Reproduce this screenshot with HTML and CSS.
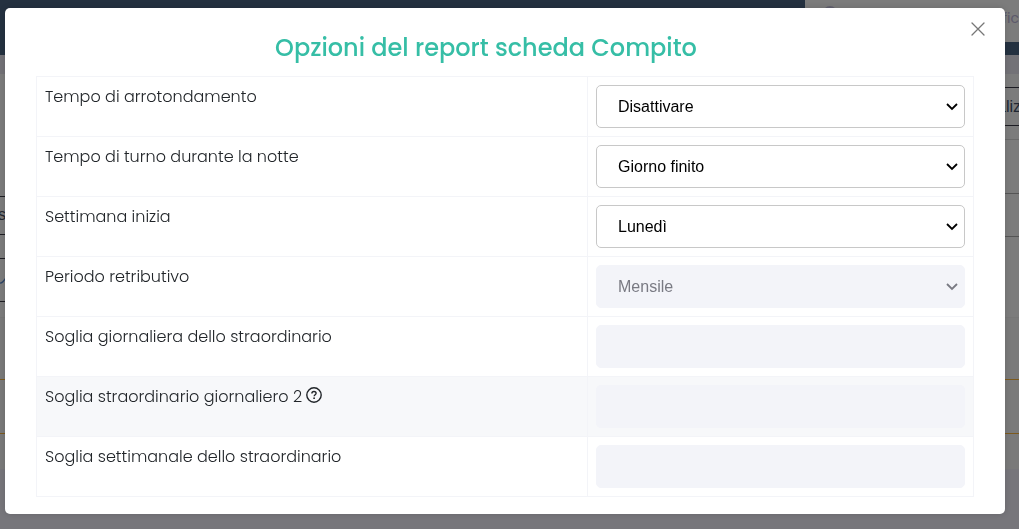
FILE: index.html
```html
<!DOCTYPE html>
<html lang="it">
<head>
    <meta charset="UTF-8">
    <meta name="viewport" content="width=device-width, initial-scale=1.0">
    <title>Opzioni del report</title>
    <link rel="stylesheet" href="styles.css">
</head>
<body>

<!-- Page behind the dialog -->
<div class="page">
    <header class="topbar">
        <div class="topbar-right">
            <svg class="search-icon" width="14" height="14" viewBox="0 0 14 14"><circle cx="7" cy="7" r="6" fill="none" stroke="#62616f" stroke-width="2"/></svg>
            <span class="topbar-text">fic</span>
        </div>
    </header>
    <div class="strip"></div>
    <main class="panel">
        <div class="panel-left">
            <div class="cell cell-name">s</div>
            <div class="cell cell-check">
                <svg width="12" height="10" viewBox="0 0 12 10"><path d="M-1 8c3 1 5-2 8-7" fill="none" stroke="#2d4566" stroke-width="1.3"/></svg>
            </div>
        </div>
        <div class="panel-right">
            <div class="cell cell-view">aliz</div>
            <div class="line line-filters"></div>
            <div class="line line-group"></div>
            <div class="line line-group-end"></div>
        </div>
    </main>
    <section class="results">
        <div class="results-row"></div>
    </section>
</div>

<div class="overlay">
    <div class="modal" role="dialog" aria-labelledby="modal-title">
        <button class="close-btn" type="button" aria-label="Chiudi">
            <svg width="14" height="14" viewBox="0 0 14 14"><path d="M1 1l12 12M13 1L1 13" fill="none" stroke="#777" stroke-width="1.3" stroke-linecap="round"/></svg>
        </button>
        <h2 class="modal-title" id="modal-title">Opzioni del report scheda Compito</h2>
        <table class="options">
            <tr>
                <td><label for="rounding">Tempo di arrotondamento</label></td>
                <td class="options-field">
                    <div class="select-box">
                        <select class="field" id="rounding"><option>Disattivare</option></select>
                        <svg class="arrow" width="12" height="8" viewBox="0 0 12 8"><path d="M1 1l5 5 5-5"/></svg>
                    </div>
                </td>
            </tr>
            <tr>
                <td><label for="night">Tempo di turno durante la notte</label></td>
                <td class="options-field">
                    <div class="select-box">
                        <select class="field" id="night"><option>Giorno finito</option></select>
                        <svg class="arrow" width="12" height="8" viewBox="0 0 12 8"><path d="M1 1l5 5 5-5"/></svg>
                    </div>
                </td>
            </tr>
            <tr>
                <td><label for="week">Settimana inizia</label></td>
                <td class="options-field">
                    <div class="select-box">
                        <select class="field" id="week"><option>Lunedì</option></select>
                        <svg class="arrow" width="12" height="8" viewBox="0 0 12 8"><path d="M1 1l5 5 5-5"/></svg>
                    </div>
                </td>
            </tr>
            <tr>
                <td><label for="period">Periodo retributivo</label></td>
                <td class="options-field">
                    <div class="select-box">
                        <select class="field" id="period" disabled><option>Mensile</option></select>
                        <svg class="arrow arrow-off" width="12" height="8" viewBox="0 0 12 8"><path d="M1 1l5 5 5-5"/></svg>
                    </div>
                </td>
            </tr>
            <tr>
                <td><label for="daily">Soglia giornaliera dello straordinario</label></td>
                <td class="options-field"><input class="field" id="daily" type="text" disabled></td>
            </tr>
            <tr class="active">
                <td>
                    <label for="daily2">Soglia straordinario giornaliero 2</label>
                    <svg class="help" width="16" height="16" viewBox="0 0 16 16"><circle cx="8" cy="8" r="7.2" fill="none" stroke="#212529" stroke-width="1.4"/><path d="M5.9 6.4c0-1.2.9-1.9 2.1-1.9s2.1.7 2.1 1.8c0 1.4-1.9 1.5-1.9 2.9" fill="none" stroke="#212529" stroke-width="1.4"/><circle cx="8.1" cy="11.2" r=".9" fill="#212529"/></svg>
                </td>
                <td class="options-field"><input class="field" id="daily2" type="text" disabled></td>
            </tr>
            <tr>
                <td><label for="weekly">Soglia settimanale dello straordinario</label></td>
                <td class="options-field"><input class="field" id="weekly" type="text" disabled></td>
            </tr>
        </table>
    </div>
</div>

</body>
</html>
```
FILE: styles.css
```css
* {
    box-sizing: border-box;
}
body {
    margin: 0;
    font-family: Poppins, Inter, sans-serif;
    font-size: 16px;
    font-weight: 300;
    color: #212529;
    background-color: #77767b;
}
.page {
    height: 100vh;
    overflow: hidden;
}
.topbar {
    display: flex;
    justify-content: flex-end;
    height: 55px;
    background-color: #243140;
}
.topbar-right {
    display: flex;
    justify-content: space-between;
    width: 21%;
    height: 42px;
    padding: 6px 0 0 18px;
    background-color: #7c7c7c;
    color: #5c596b;
    font-size: 14px;
    font-weight: 400;
    line-height: 24px;
}
.strip {
    height: 19px;
    background-color: #737277;
}
.panel {
    display: flex;
    justify-content: space-between;
    height: 244px;
    background-color: #7c7c7c;
    border-bottom: 1px solid #777;
}
.panel-left {
    width: 24px;
    padding-top: 122px;
}
.panel-right {
    width: 24px;
    padding-top: 13px;
}
.cell {
    border: 1px solid #1d1d24;
    border-width: 1px 0;
    font-family: "Liberation Sans", Arial, sans-serif;
    font-weight: 400;
}
.cell-name {
    height: 39px;
    line-height: 36px;
    color: #25282f;
    text-indent: -2px;
}
.cell-check {
    height: 44px;
    margin-top: 23px;
    padding-top: 12px;
}
.cell-view {
    height: 39px;
    padding-left: 2px;
    line-height: 37px;
    color: #202733;
}
.line {
    border-top: 1px solid #6b6b6b;
}
.line-filters {
    margin-top: 13px;
}
.line-group {
    margin-top: 53px;
    border-color: #555;
}
.line-group-end {
    margin-top: 42px;
    border-color: #555;
}
.results {
    height: 151px;
    padding-top: 61px;
    background-color: #7a7a7a;
}
.results-row {
    height: 55px;
    border: 1px solid #7c5a1e;
    border-width: 1px 0;
}
.overlay {
    position: fixed;
    inset: 0;
    padding: 8px 14px 0 5px;
}
.modal {
    position: relative;
    padding: 22px 31px 17px;
    background-color: #fff;
    border-radius: 5px;
    box-shadow: 0 0 6px rgba(0, 0, 0, 0.15);
}
.close-btn {
    position: absolute;
    top: 14px;
    right: 20px;
    padding: 0;
    border: none;
    background: none;
    line-height: 0;
    cursor: pointer;
}
.modal-title {
    margin: 0 0 10px;
    padding-right: 38px;
    font-size: 24px;
    font-weight: 500;
    line-height: 36px;
    text-align: center;
    color: #36bea6;
}
.options {
    width: 100%;
    border-collapse: collapse;
}
.options td {
    padding: 8px;
    border: 1px solid #f3f4f8;
    line-height: 24px;
    vertical-align: top;
}
.options .options-field {
    width: 386px;
}
.options .active {
    background-color: #f7f8fa;
}
.select-box {
    position: relative;
}
.field {
    display: block;
    width: 100%;
    height: 43px;
    padding: 0 21px;
    border: 1px solid #c8c8c8;
    border-radius: 5px;
    appearance: none;
    background-color: #fff;
    color: #000;
    font-family: "Liberation Sans", Arial, sans-serif;
    font-size: 16px;
}
.field:disabled {
    border-color: #f3f4f9;
    background-color: #f3f4f9;
    color: #797a83;
    opacity: 1;
}
.arrow {
    position: absolute;
    top: 18px;
    right: 7px;
    fill: none;
    stroke: #000;
    stroke-width: 1.8;
    pointer-events: none;
}
.arrow-off {
    stroke: #797a83;
}
.help {
    vertical-align: -1px;
}
```
